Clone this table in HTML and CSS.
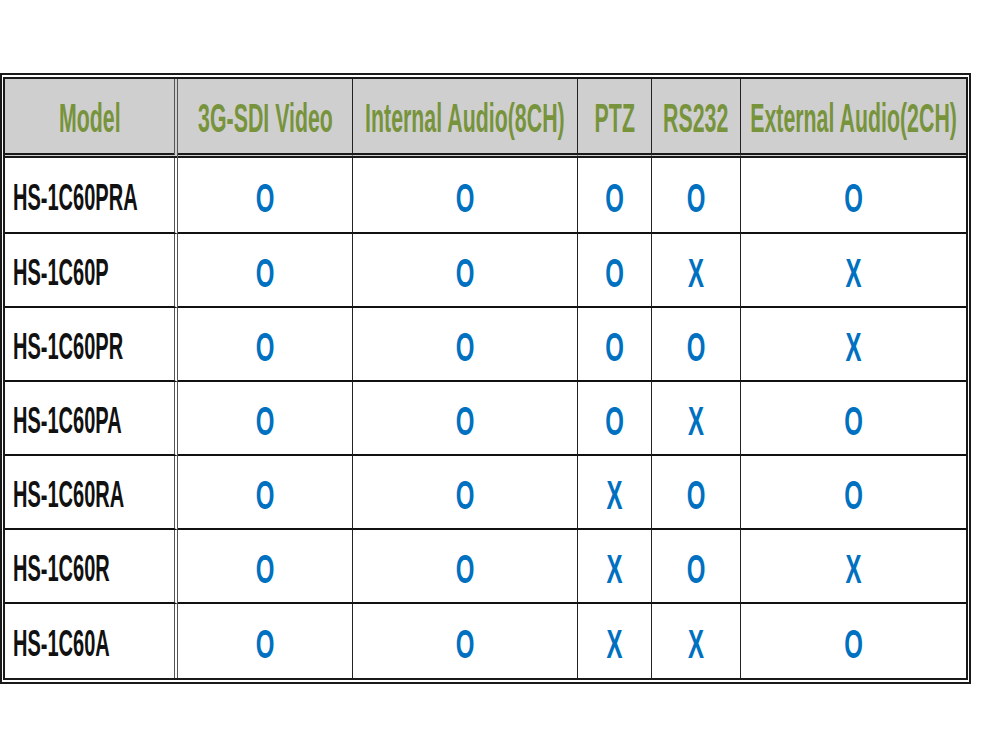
FILE: index.html
```html
<!DOCTYPE html>
<html>
<head>
<meta charset="utf-8">
<link rel="stylesheet" href="styles.css">
</head>
<body>
<table class="spec">
  <colgroup>
    <col class="c-model"><col class="c-video"><col class="c-int"><col class="c-ptz"><col class="c-rs"><col class="c-ext">
  </colgroup>
  <thead>
    <tr>
      <th class="first"><span class="h">Model</span></th>
      <th><span class="h">3G-SDI Video</span></th>
      <th><span class="h">Internal Audio(8CH)</span></th>
      <th><span class="h">PTZ</span></th>
      <th><span class="h">RS232</span></th>
      <th class="last"><span class="h">External Audio(2CH)</span></th>
    </tr>
  </thead>
  <tbody>
    <tr class="firstrow"><td class="first"><span class="m">HS-1C60PRA</span></td><td><span class="v">O</span></td><td><span class="v">O</span></td><td><span class="v">O</span></td><td><span class="v">O</span></td><td class="last"><span class="v">O</span></td></tr>
    <tr><td class="first"><span class="m">HS-1C60P</span></td><td><span class="v">O</span></td><td><span class="v">O</span></td><td><span class="v">O</span></td><td><span class="v">X</span></td><td class="last"><span class="v">X</span></td></tr>
    <tr><td class="first"><span class="m">HS-1C60PR</span></td><td><span class="v">O</span></td><td><span class="v">O</span></td><td><span class="v">O</span></td><td><span class="v">O</span></td><td class="last"><span class="v">X</span></td></tr>
    <tr><td class="first"><span class="m">HS-1C60PA</span></td><td><span class="v">O</span></td><td><span class="v">O</span></td><td><span class="v">O</span></td><td><span class="v">X</span></td><td class="last"><span class="v">O</span></td></tr>
    <tr><td class="first"><span class="m">HS-1C60RA</span></td><td><span class="v">O</span></td><td><span class="v">O</span></td><td><span class="v">X</span></td><td><span class="v">O</span></td><td class="last"><span class="v">O</span></td></tr>
    <tr><td class="first"><span class="m">HS-1C60R</span></td><td><span class="v">O</span></td><td><span class="v">O</span></td><td><span class="v">X</span></td><td><span class="v">O</span></td><td class="last"><span class="v">X</span></td></tr>
    <tr class="lastrow"><td class="first"><span class="m">HS-1C60A</span></td><td><span class="v">O</span></td><td><span class="v">O</span></td><td><span class="v">X</span></td><td><span class="v">X</span></td><td class="last"><span class="v">O</span></td></tr>
  </tbody>
</table>
</body>
</html>
```

FILE: styles.css
```css
html, body {
  margin: 0;
  padding: 0;
  background: #ffffff;
}

body {
  font-family: "Liberation Sans", Arial, sans-serif;
  font-weight: bold;
}

.spec {
  margin-top: 73px;
  width: 971px;
  table-layout: fixed;
  border-collapse: separate;
  border-spacing: 0;
  border-style: double;
  border-color: #1a1a1a;
  border-width: 6px 5px 6px 5px;
}

.c-model { width: 173px; }
.c-video { width: 175px; }
.c-int { width: 225px; }
.c-ptz { width: 74px; }
.c-rs { width: 89px; }
.c-ext { width: 225px; }

th, td {
  box-sizing: border-box;
  padding: 0;
  text-align: center;
  vertical-align: middle;
  border-right: 1px solid #222;
}

th {
  height: 79px;
  padding-top: 5px;
  background: #cfcfcf;
  border-bottom: 5px double #1a1a1a;
}

td {
  height: 74px;
  padding-top: 6px;
  border-bottom: 2px solid #111;
}

.firstrow td {
  height: 76px;
}

.lastrow td {
  border-bottom: none;
  height: 74px;
}

th.first, td.first {
  border-right: 4px double #555;
}

th.last, td.last {
  border-right: none;
}

td.first {
  text-align: left;
  padding-left: 8px;
}

.h {
  display: inline-block;
  font-size: 22px;
  color: #77933c;
  white-space: nowrap;
  transform: scale(0.97, 1.84);
  transform-origin: center center;
}

.m {
  display: inline-block;
  font-size: 22px;
  color: #111;
  white-space: nowrap;
  transform: scale(0.91, 1.71);
  transform-origin: left center;
}

.v {
  display: inline-block;
  font-size: 24px;
  color: #0070c0;
  transform: scale(1, 1.72);
  transform-origin: center center;
}
```
